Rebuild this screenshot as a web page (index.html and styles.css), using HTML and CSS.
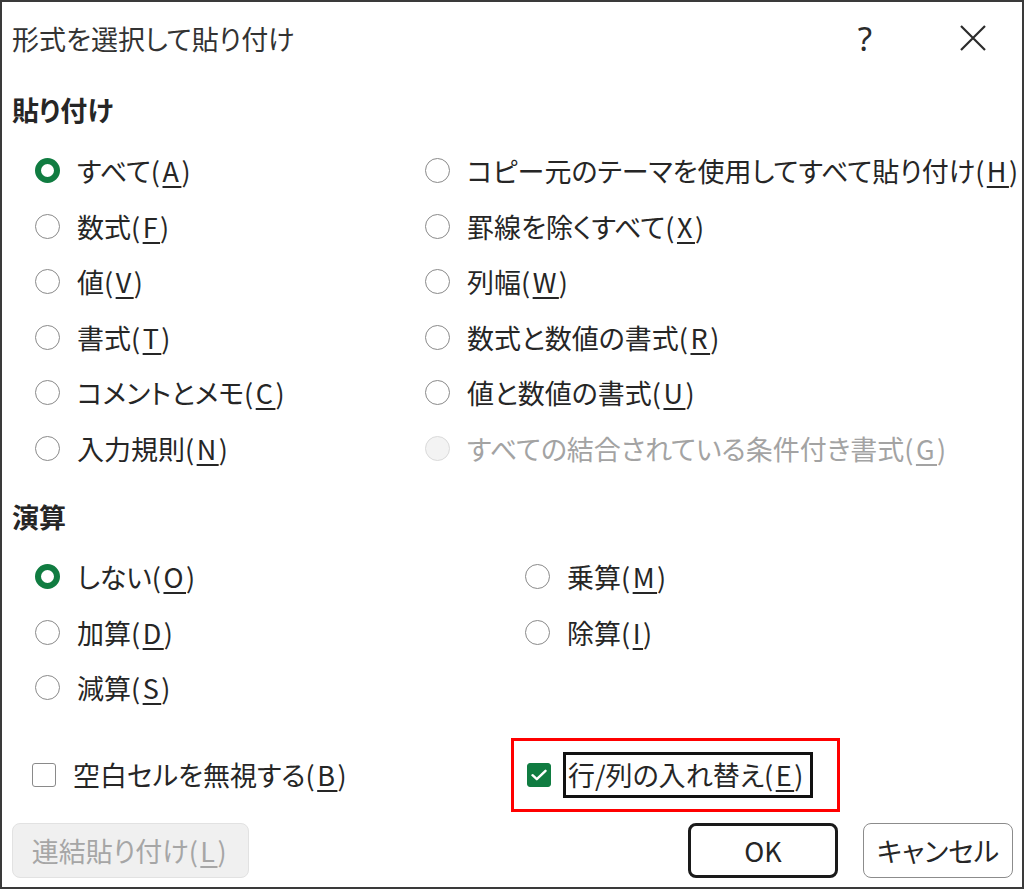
FILE: index.html
```html
<!DOCTYPE html>
<html lang="ja">
<head>
<meta charset="utf-8">
<title>形式を選択して貼り付け</title>
<link rel="stylesheet" href="styles.css">
</head>
<body>
<div class="dialog">
  <div class="titlebar">
    <div class="title">形式を選択して貼り付け</div>
    <div class="title-actions">
      <span class="help">?</span>
      <svg class="close" width="30" height="30" viewBox="0 0 30 30"><path d="M3 3 L27 27 M27 3 L3 27" stroke="#2b2b2b" stroke-width="2.2" fill="none"/></svg>
    </div>
  </div>

  <div class="heading heading-paste">貼り付け</div>
  <div class="grid grid-paste">
    <label class="opt"><span class="radio on"></span><span>すべて<span class="k">(<u>A</u>)</span></span></label>
    <label class="opt"><span class="radio"></span><span>コピー元のテーマを使用してすべて貼り付け<span class="k">(<u>H</u>)</span></span></label>
    <label class="opt"><span class="radio"></span><span>数式<span class="k">(<u>F</u>)</span></span></label>
    <label class="opt"><span class="radio"></span><span>罫線を除くすべて<span class="k">(<u>X</u>)</span></span></label>
    <label class="opt"><span class="radio"></span><span>値<span class="k">(<u>V</u>)</span></span></label>
    <label class="opt"><span class="radio"></span><span>列幅<span class="k">(<u>W</u>)</span></span></label>
    <label class="opt"><span class="radio"></span><span>書式<span class="k">(<u>T</u>)</span></span></label>
    <label class="opt"><span class="radio"></span><span>数式と数値の書式<span class="k">(<u>R</u>)</span></span></label>
    <label class="opt"><span class="radio"></span><span>コメントとメモ<span class="k">(<u>C</u>)</span></span></label>
    <label class="opt"><span class="radio"></span><span>値と数値の書式<span class="k">(<u>U</u>)</span></span></label>
    <label class="opt"><span class="radio"></span><span>入力規則<span class="k">(<u>N</u>)</span></span></label>
    <label class="opt disabled"><span class="radio"></span><span>すべての結合されている条件付き書式<span class="k">(<u>G</u>)</span></span></label>
  </div>

  <div class="heading heading-ops">演算</div>
  <div class="grid grid-ops">
    <label class="opt"><span class="radio on"></span><span>しない<span class="k">(<u>O</u>)</span></span></label>
    <label class="opt"><span class="radio"></span><span>乗算<span class="k">(<u>M</u>)</span></span></label>
    <label class="opt"><span class="radio"></span><span>加算<span class="k">(<u>D</u>)</span></span></label>
    <label class="opt"><span class="radio"></span><span>除算<span class="k">(<u>I</u>)</span></span></label>
    <label class="opt"><span class="radio"></span><span>減算<span class="k">(<u>S</u>)</span></span></label>
  </div>

  <div class="checks">
    <label class="chk-item"><span class="checkbox"></span><span>空白セルを無視する<span class="k">(<u>B</u>)</span></span></label>
    <div class="highlight">
      <span class="checkbox on"><svg width="16" height="12" viewBox="0 0 16 12"><path d="M1.5 6.2 L5.8 10.2 L14.5 1.8" stroke="#fff" stroke-width="2.4" fill="none" stroke-linecap="round" stroke-linejoin="round"/></svg></span>
      <span class="focus">行/列の入れ替え<span class="k">(<u>E</u>)</span></span>
    </div>
  </div>

  <div class="footer">
    <button class="btn btn-disabled">連結貼り付け<span class="k">(<u>L</u>)</span></button>
    <div class="btn-group">
      <button class="btn btn-default">OK</button>
      <button class="btn btn-normal">キャンセル</button>
    </div>
  </div>
</div>
</body>
</html>
```

FILE: styles.css
```css
* { box-sizing: border-box; }
html, body { margin: 0; padding: 0; background: #ffffff; }
body {
  font-family: "Noto Sans CJK JP", "Noto Sans", sans-serif;
  font-feature-settings: "palt";
  color: #262626;
  font-size: 27px;
}
.dialog {
  width: 1024px;
  height: 889px;
  border: 2px solid #3a3a3a;
  background: #ffffff;
  display: flex;
  flex-direction: column;
}
.titlebar {
  height: 72px;
  display: flex;
  align-items: center;
  justify-content: space-between;
  padding-left: 10px;
  padding-right: 34px;
}
.title {
  font-size: 27px;
  color: #333333;
}
.title-actions {
  display: flex;
  align-items: center;
  gap: 86px;
}
.help {
  font-family: "Noto Sans", sans-serif;
  font-size: 33px;
  line-height: 1;
  color: #2b2b2b;
}
.close { display: block; }
.heading {
  font-weight: bold;
  line-height: 36px;
  height: 36px;
  padding-left: 10px;
  color: #262626;
}
.heading-paste { margin-top: 18px; }
.heading-ops { margin-top: 23px; }
.grid {
  display: grid;
  grid-auto-rows: 55.5px;
  padding-left: 33px;
}
.grid-paste { margin-top: 15px; grid-template-columns: 390px 1fr; }
.grid-ops { margin-top: 14px; grid-template-columns: 490px 1fr; }
.opt {
  display: flex;
  align-items: center;
  gap: 17px;
  white-space: nowrap;
}
.k { letter-spacing: 2.5px; }
u { text-underline-offset: 4px; text-decoration-thickness: 1.5px; }
.radio {
  width: 25px;
  height: 25px;
  border-radius: 50%;
  border: 1.6px solid #8a8a8a;
  background: #fff;
  flex: none;
}
.radio.on {
  border: 6px solid #107c41;
}
.opt.disabled { color: #a3a3a3; }
.opt.disabled .radio {
  border-color: #dadada;
  background: #f3f3f3;
}
.checks {
  margin-top: 22px;
  height: 74px;
  display: grid;
  grid-template-columns: 479px auto;
  justify-content: start;
  padding-left: 30px;
}
.chk-item {
  display: flex;
  align-items: center;
  gap: 17px;
  white-space: nowrap;
}
.checkbox {
  width: 24px;
  height: 24px;
  border: 1.6px solid #8a8a8a;
  border-radius: 3px;
  flex: none;
  display: flex;
  align-items: center;
  justify-content: center;
}
.checkbox.on {
  background: #107c41;
  border-color: #107c41;
}
.highlight {
  width: 329px;
  height: 74px;
  border: 3px solid #ff0000;
  display: flex;
  align-items: center;
  padding-left: 13px;
  gap: 12px;
}
.focus {
  border: 3px solid #111;
  height: 46px;
  padding: 0 4px 0 2px;
  display: flex;
  align-items: center;
  white-space: nowrap;
}
.footer {
  margin-top: 11px;
  display: flex;
  justify-content: space-between;
  padding: 0 9px 0 10px;
}
.btn-group { display: flex; gap: 25px; }
.btn {
  font-family: "Noto Sans CJK JP", "Noto Sans", sans-serif;
  font-feature-settings: "palt";
  font-size: 27px;
  height: 55px;
  border-radius: 8px;
  background: #fff;
  color: #262626;
  padding: 0;
  display: flex;
  align-items: center;
  justify-content: center;
  white-space: nowrap;
}
.btn-disabled {
  width: 237px;
  background: #f0f0f0;
  border: 1.5px solid #e2e2e2;
  color: #a6a6a6;
}
.btn-default {
  width: 150px;
  border: 3px solid #1a1a1a;
}
.btn-normal {
  width: 150px;
  border: 1.5px solid #8c8c8c;
}
```
